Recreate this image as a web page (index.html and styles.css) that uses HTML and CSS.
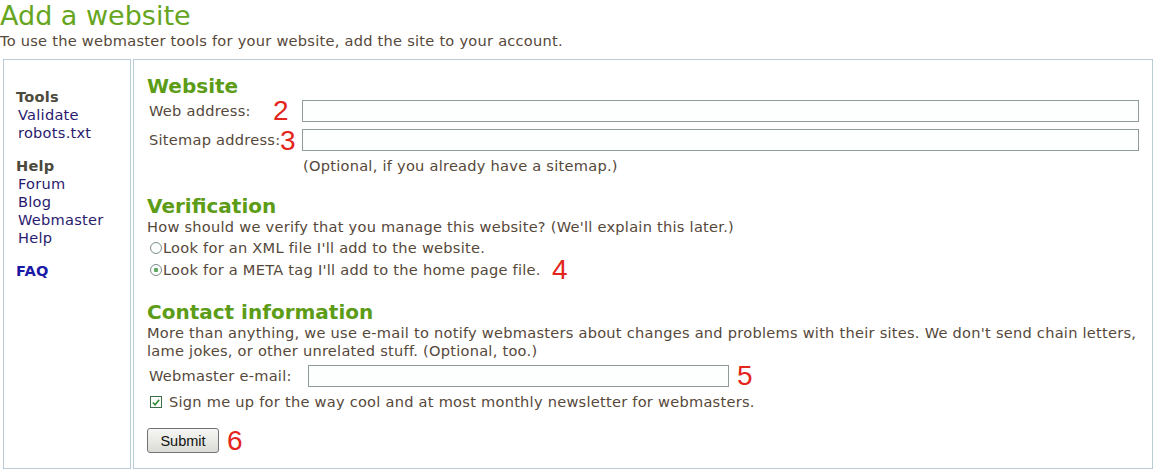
FILE: index.html
```html
<!DOCTYPE html>
<html lang="en">
  <head>
    <meta charset="UTF-8" />
    <title>Add a website</title>
    <link rel="stylesheet" href="styles.css">
  </head>
  <body>
    <h1 class="title">Add a website</h1>
    <p class="intro">To use the webmaster tools for your website, add the site to your account.</p>

    <div class="frame">
      <div class="sidebar">
        <div class="navgroup">
          <b class="navhead">Tools</b>
          <a class="navlink" href="#">Validate</a>
          <a class="navlink" href="#">robots.txt</a>
        </div>
        <div class="navgroup">
          <b class="navhead">Help</b>
          <a class="navlink" href="#">Forum</a>
          <a class="navlink" href="#">Blog</a>
          <a class="navlink" href="#">Webmaster</a>
          <a class="navlink" href="#">Help</a>
        </div>
        <div class="navgroup">
          <a class="faq" href="#">FAQ</a>
        </div>
      </div>

      <form class="main">
        <h2 class="section first">Website</h2>
        <div class="field">
          <label class="label">Web address:</label>
          <input class="textbox" type="text" />
          <span class="num num2">2</span>
        </div>
        <div class="field second">
          <label class="label">Sitemap address:</label>
          <input class="textbox" type="text" />
          <span class="num num3">3</span>
        </div>
        <p class="hint">(Optional, if you already have a sitemap.)</p>

        <h2 class="section">Verification</h2>
        <p class="text">How should we verify that you manage this website? (We'll explain this later.)</p>
        <div class="choices">
          <label class="choice"><input class="radio" type="radio" name="verify" />Look for an XML file I'll add to the website.</label>
          <label class="choice"><input class="radio" type="radio" name="verify" checked />Look for a META tag I'll add to the home page file.<span class="num num4">4</span></label>
        </div>

        <h2 class="section">Contact information</h2>
        <p class="text">More than anything, we use e-mail to notify webmasters about changes and problems with their sites. We don't send chain letters, lame jokes, or other unrelated stuff. (Optional, too.)</p>
        <div class="field mail">
          <label class="label">Webmaster e-mail:</label>
          <input class="textbox short" type="text" />
          <span class="num num5">5</span>
        </div>
        <label class="signup">
          <span class="tick"><svg width="11" height="11" viewBox="0 0 11 11"><path d="M2 5.5 L4.5 8 L9 2.5" fill="none" stroke="#2f8a2f" stroke-width="1.8"/></svg></span>
          Sign me up for the way cool and at most monthly newsletter for webmasters.
        </label>
        <div class="actions">
          <button class="submit" type="button">Submit</button>
          <span class="num num6">6</span>
        </div>
      </form>
    </div>
  </body>
</html>
```

FILE: styles.css
```css
body {
  margin: 0;
  padding: 0;
  font-family: "DejaVu Sans", Verdana, sans-serif;
  font-size: 14.6px;
  letter-spacing: 0.25px;
  line-height: 18px;
  color: #56483a;
  background: #fff;
}
.title {
  margin: 0;
  padding-top: 1px;
  font-size: 27px;
  line-height: 30px;
  font-weight: normal;
  letter-spacing: 0;
  color: #66a51e;
}
.intro {
  margin: 1px 0 0 0;
}
.frame {
  display: flex;
  gap: 2px;
  margin: 9px 2px 0 3px;
  height: 410px;
}
.sidebar {
  width: 128px;
  border: 1px solid #b9ccd3;
  padding: 28px 0 0 12px;
  box-sizing: border-box;
}
.navgroup {
  display: flex;
  flex-direction: column;
  margin-bottom: 15px;
}
.navhead {
  color: #4c4a3c;
}
.navlink {
  margin-left: 2px;
  color: #2a1a6e;
  text-decoration: none;
}
.faq {
  font-weight: bold;
  color: #1a1aa6;
  text-decoration: none;
}
.main {
  flex: 1;
  border: 1px solid #b9ccd3;
  padding: 14px 13px 0 13px;
  margin: 0;
}
.section {
  margin: 19px 0 0 0;
  font-size: 20px;
  line-height: 24px;
  letter-spacing: 0;
  color: #5c9c16;
}
.section.first {
  margin-top: 0;
}
.field {
  position: relative;
  display: flex;
  align-items: center;
  margin-top: 2px;
}
.field.second {
  margin-top: 7px;
}
.field.mail {
  margin-top: 5px;
}
.label {
  width: 153px;
  flex: none;
  margin-left: 2px;
}
.mail .label {
  width: 159px;
}
.textbox {
  flex: 1;
  height: 22px;
  box-sizing: border-box;
  border: 1px solid #8f9c9c;
  margin: 0;
  background: #fdfefe;
}
.textbox.short {
  flex: none;
  width: 421px;
}
.num {
  position: absolute;
  font-family: "Liberation Sans", Arial, sans-serif;
  font-size: 28px;
  line-height: 28px;
  letter-spacing: 0;
  color: #e3251c;
}
.num2 { left: 126px; top: -3px; }
.num3 { left: 133px; top: -2px; }
.num4 { left: 402px; top: -3px; }
.num5 { left: 590px; top: -3px; }
.num6 { left: 80px; top: -1px; }
.hint {
  margin: 6px 0 0 156px;
}
.text {
  margin: 0;
}
.choices {
  margin-top: 1px;
}
.choice {
  position: relative;
  display: flex;
  align-items: center;
  height: 22px;
  margin-left: 3px;
}
.radio {
  appearance: none;
  width: 12px;
  height: 12px;
  margin: 0 1px 0 0;
  border: 1px solid #7d8c8c;
  border-radius: 50%;
  background: #fbfcfc;
  box-sizing: border-box;
}
.radio:checked {
  background: radial-gradient(circle, #5fa85f 0 2px, #fbfcfc 2.5px);
}
.signup {
  display: flex;
  align-items: center;
  margin: 6px 0 0 3px;
}
.tick {
  display: inline-flex;
  align-items: center;
  justify-content: center;
  width: 12px;
  height: 12px;
  box-sizing: border-box;
  border: 1px solid #3c6e4a;
  margin-right: 7px;
}
.actions {
  position: relative;
  margin-top: 17px;
}
.submit {
  width: 72px;
  height: 25px;
  border: 1px solid #6f7478;
  border-radius: 3px;
  background: linear-gradient(#f6f6f4, #dcdcd6);
  font-family: "Liberation Sans", Arial, sans-serif;
  font-size: 14.5px;
  letter-spacing: 0;
  color: #111;
  padding: 0;
}
```
